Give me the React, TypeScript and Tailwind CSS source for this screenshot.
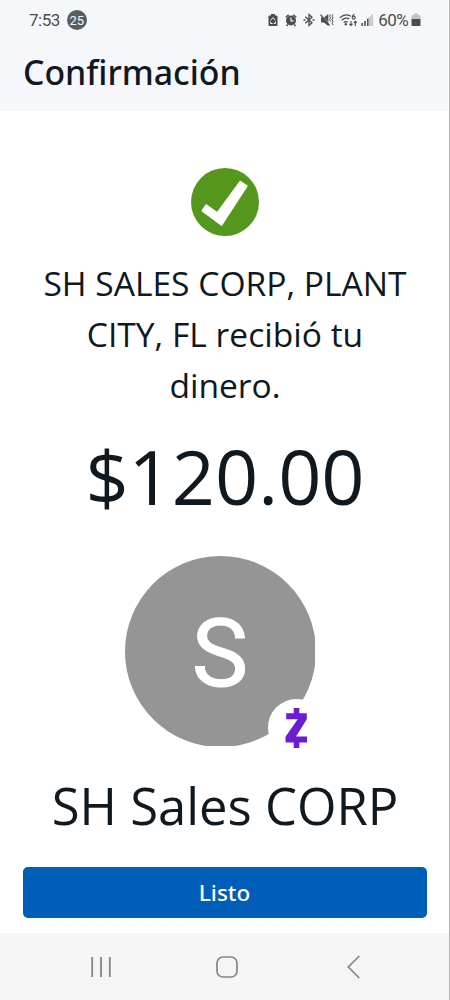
import type { ReactNode } from "react";

interface StatusIconProps {
  width: number;
  className?: string;
  children: ReactNode;
}

function StatusIcon({ width, className = "", children }: StatusIconProps) {
  return (
    <svg
      width={width}
      height={16}
      viewBox={`0 0 ${width} 16`}
      fill="none"
      className={`shrink-0 ${className}`}
    >
      {children}
    </svg>
  );
}

function StatusBar() {
  return (
    <div className="flex h-10 items-center pl-[29px] pr-[27px] font-['Roboto',sans-serif] text-[#4b4c50]">
      <span className="text-[17px] leading-5 tracking-[-0.5px]">7:53</span>
      <span className="ml-[7px] flex size-5 items-center justify-center rounded-full bg-[#5b5c5f] text-[13px] leading-none text-[#f5f7fb]">
        25
      </span>

      <div className="ml-auto flex items-center">
        {/* battery saver */}
        <StatusIcon width={10}>
          <path d="M3 2h4v1.5h1.5q1 0 1 1V13q0 1-1 1h-7q-1 0-1-1V4.500q0-1 1-1H3z" fill="#4b4c50" />
          <path d="M2.800 8.200 5 5.600l2.200 2.600M2.600 9.500v2h1.900M7.400 9.500v2H5.700" stroke="#f5f7fb" strokeWidth="1" />
        </StatusIcon>

        {/* alarm */}
        <StatusIcon width={12} className="ml-[7px]">
          <circle cx="6" cy="8.500" r="5" fill="#4b4c50" />
          <path d="M.8 5.200 3.700 2.700M11.200 5.200 8.300 2.700M2.800 12.400l-1.300 1.500M9.200 12.400l1.300 1.500" stroke="#4b4c50" strokeWidth="1.500" />
          <path d="M6 5.400v3.400h2.600" stroke="#f5f7fb" strokeWidth="1.200" />
        </StatusIcon>

        {/* bluetooth */}
        <StatusIcon width={12} className="ml-[6px]">
          <path d="m2.300 4.800 6.700 6L6 13.600V2.400l3 2.800-6.700 6" stroke="#4b4c50" strokeWidth="1.300" />
          <path d="M.5 8h2M9.500 8h2" stroke="#4b4c50" strokeWidth="1.500" />
        </StatusIcon>

        {/* muted */}
        <StatusIcon width={14} className="ml-[5px]">
          <path d="M1 5.500h3L8.300 2v12L4 10.500H1z" fill="#4b4c50" />
          <path d="m1.300 2.300 9 11" stroke="#f5f7fb" strokeWidth=".7" />
          <path d="m.5 2.700 9 10.800" stroke="#4b4c50" strokeWidth="1.300" />
          <path d="m10.500 2.500-1 1.700 1 1.700-1 1.800 1 1.800M13 2.500l-1 1.700 1 1.700-1 1.800 1 1.800-1 1.800 1 1.800" stroke="#4b4c50" strokeWidth="1" />
        </StatusIcon>

        {/* wifi */}
        <StatusIcon width={19} className="ml-[5px]">
          <path d="M.8 5.700Q6.200.9 11.800 4.200M2.700 8.200q3.700-3.300 7.600-1.400M4.700 10.500q2-1.600 4-.4" stroke="#4b4c50" strokeWidth="1.300" />
          <circle cx="6.800" cy="12.300" r="1.200" fill="#4b4c50" />
          <path d="M15.400 2.300q-2.200 1-2.200 3.200" stroke="#4b4c50" strokeWidth="1.100" />
          <circle cx="14.700" cy="5.600" r="1.500" stroke="#4b4c50" strokeWidth="1.100" />
          <path d="M12 9v4.500m-1.600-1.600L12 13.500l1.600-1.600M16.300 14V9.200m-1.600 1.600 1.600-1.600 1.600 1.600" stroke="#4b4c50" strokeWidth="1.100" />
        </StatusIcon>

        {/* signal */}
        <StatusIcon width={12} className="ml-[3px]">
          <path d="M1.200 14v-3M4 14V9M6.800 14V6.500" stroke="#5b5c60" strokeWidth="1.700" />
          <path d="M9 14V4.500M11.200 14V2.500" stroke="#bfc1c6" strokeWidth="1.700" />
        </StatusIcon>

        <span className="ml-[5px] text-[17px] leading-5 tracking-[-0.6px]">60%</span>

        {/* battery level */}
        <StatusIcon width={10} className="ml-[3px]">
          <path d="M3 1.500h4v1.600h1q1.500 0 1.500 1.400v3h-9v-3q0-1.400 1.500-1.400h1z" fill="#bfc1c6" />
          <path d="M.5 7h9v6q0 1-1 1h-7q-1 0-1-1z" fill="#4b4c50" />
        </StatusIcon>
      </div>
    </div>
  );
}

function SuccessBadge() {
  return (
    <svg width="68" height="68" viewBox="0 0 68 68" className="block">
      <circle cx="34" cy="34" r="34" fill="#55961c" />
      <path
        d="M11.500 42.700 15.300 37.300 26.400 45.200 49.300 13.800 55.700 18 30.500 56.600z"
        fill="#fff"
        stroke="#fff"
        strokeWidth="2"
        strokeLinejoin="round"
      />
    </svg>
  );
}

function Avatar({ initial }: { initial: string }) {
  return (
    <div className="relative mr-[11px] h-[190px] w-[190px]">
      <div className="h-full w-full overflow-hidden">
        <div className="flex h-[191px] w-[191px] items-center justify-center rounded-full bg-[#959595] pt-[3px] font-['Roboto',sans-serif] text-[95px] leading-none text-white [-webkit-text-stroke:1px_white]">
          {initial}
        </div>
      </div>
      <div className="absolute left-[143px] top-[143px] flex size-[57px] items-center justify-center rounded-full bg-white">
        <svg width="24" height="42" viewBox="0 0 24 42" fill="#6a1ed0">
          <path d="M9.700 1h5.600v5.300h7.500v5.900L12 29.600h11v5.900h-7.700V41H9.700v-5.500H1.500v-5.700l12.200-17.600H2.200V6.300h7.500z" />
        </svg>
      </div>
    </div>
  );
}

function NavigationBar() {
  return (
    <div className="flex h-[67px] items-center bg-[#f5f5f5] text-[#858585]">
      <svg width="20" height="22" viewBox="0 0 20 22" className="ml-[91px]">
        <path d="M1.200 1v20M10 1v20M18.800 1v20" stroke="currentColor" strokeWidth="1.800" />
      </svg>
      <svg width="22" height="22" viewBox="0 0 22 22" fill="none" className="ml-[105px]">
        <rect x="1" y="1" width="20" height="20" rx="6" stroke="currentColor" strokeWidth="1.700" />
      </svg>
      <svg width="13" height="24" viewBox="0 0 13 24" fill="none" className="ml-[109px]">
        <path d="M12.300 1 1.300 12l11 11" stroke="currentColor" strokeWidth="1.700" />
      </svg>
    </div>
  );
}

export default function App() {
  return (
    <div className="h-[1000px] w-[450px] overflow-hidden border-r border-[#b5b5b5] bg-white font-['Open_Sans',sans-serif] text-[#101820]">
      <header className="mr-px h-[111px] bg-[#f5f7fb]">
        <StatusBar />
        <h1 className="pl-[23px] font-['Noto_Sans','Open_Sans',sans-serif] text-[33.800px] font-medium leading-[65px]">
          Confirmación
        </h1>
      </header>

      <main className="flex h-[822px] flex-col items-center pl-px pt-[57px]">
        <SuccessBadge />
        <p className="mt-[22px] whitespace-nowrap text-center text-[33.6px] leading-[51px]">
          SH SALES CORP, PLANT
          <br />
          CITY, FL recibió tu
          <br />
          dinero.
        </p>
        <p className="mt-[15px] text-[75.600px] leading-[100px]">$120.00</p>
        <div className="mt-[30px]">
          <Avatar initial="S" />
        </div>
        <p className="mt-[25px] whitespace-nowrap text-[50.800px] leading-[70px]">
          SH Sales CORP
        </p>
        <button className="mt-[26px] h-[51px] w-[404px] shrink-0 rounded-[5px] bg-[#005eb8] pr-px font-['Noto_Sans','Open_Sans',sans-serif] text-[22.500px] font-medium text-white">
          Listo
        </button>
      </main>

      <NavigationBar />
    </div>
  );
}
